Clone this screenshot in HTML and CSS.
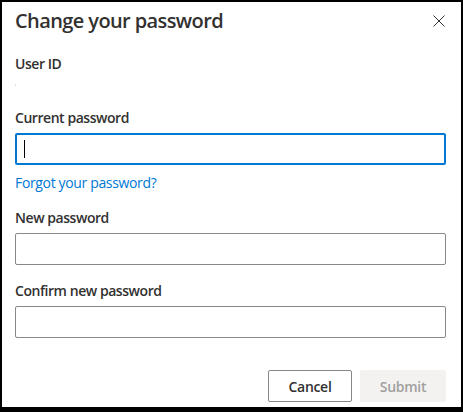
FILE: index.html
```html
<!DOCTYPE html>
<html lang="en">
<head>
<meta charset="utf-8">
<title>Change your password</title>
<link rel="stylesheet" href="styles.css">
</head>
<body>
<div class="dialog">
  <div class="header">
    <h1 class="title">Change your password</h1>
    <button class="close" aria-label="Close">
      <svg width="12" height="12" viewBox="0 0 12 12"><path d="M0.5 0.5 L11.5 11.5 M11.5 0.5 L0.5 11.5" stroke="#323130" stroke-width="1" fill="none"/></svg>
    </button>
  </div>
  <div class="label first">User ID</div>
  <div class="value"><span class="dot"></span></div>
  <div class="label">Current password</div>
  <div class="field focused"><span class="caret"></span></div>
  <a class="link" href="#">Forgot your password?</a>
  <div class="label gap">New password</div>
  <div class="field"></div>
  <div class="label gap2">Confirm new password</div>
  <div class="field"></div>
  <div class="actions">
    <button class="btn cancel">Cancel</button>
    <button class="btn submit" disabled>Submit</button>
  </div>
</div>
</body>
</html>
```

FILE: styles.css
```css
html, body {
  margin: 0;
  height: 100%;
}
body {
  background: #000;
  padding: 2px 2px 5px 2px;
  box-sizing: border-box;
  font-family: "Open Sans", "Noto Sans", sans-serif;
  color: #323130;
}
.dialog {
  background: #fff;
  height: 100%;
  box-sizing: border-box;
  padding: 5px 15px 5px 13px;
  display: flex;
  flex-direction: column;
}
.header {
  display: flex;
  align-items: center;
  justify-content: space-between;
}
.title {
  margin: 0;
  font-size: 20px;
  line-height: 28px;
  font-weight: 600;
  letter-spacing: -0.6px;
  color: #323130;
}
.close {
  border: 0;
  background: transparent;
  padding: 0;
  margin-right: 1px;
  width: 12px;
  height: 12px;
  display: flex;
}
.label {
  font-size: 14px;
  line-height: 20px;
  font-weight: 600;
  letter-spacing: -0.45px;
  padding: 5px 0;
  color: #323130;
}
.label.first { margin-top: 14px; }
.label.gap { margin-top: 10px; }
.label.gap2 { margin-top: 11px; }
.value {
  height: 24px;
}
.dot {
  display: block;
  width: 1px;
  height: 2px;
  margin-top: 5px;
  background: #e1dfdd;
}
.field {
  height: 32px;
  box-sizing: border-box;
  border: 1px solid #8a8886;
  border-radius: 2px;
  display: flex;
  align-items: center;
  padding-left: 7px;
}
.field.focused {
  border: 2px solid #0078d4;
  padding-left: 7px;
}
.caret {
  width: 1px;
  height: 18px;
  background: #000;
}
.link {
  margin-top: 8px;
  font-size: 14px;
  line-height: 20px;
  letter-spacing: -0.35px;
  color: #0078d4;
  text-decoration: none;
  align-self: flex-start;
}
.actions {
  margin-top: 32px;
  display: flex;
  justify-content: flex-end;
  gap: 8px;
}
.btn {
  height: 32px;
  border-radius: 2px;
  font-family: "Open Sans", "Noto Sans", sans-serif;
  font-size: 14px;
  font-weight: 600;
  letter-spacing: -0.3px;
  padding: 0;
  box-sizing: border-box;
}
.cancel {
  width: 84px;
  background: #fff;
  border: 1px solid #8a8886;
  color: #323130;
}
.submit {
  width: 86px;
  background: #f3f2f1;
  border: 1px solid #f3f2f1;
  color: #a19f9d;
}
```
